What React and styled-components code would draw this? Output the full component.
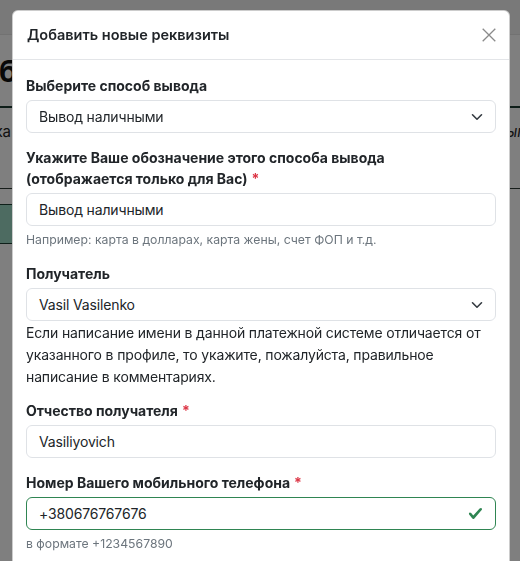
import React from "react";
import styled, { createGlobalStyle } from "styled-components";

const GlobalStyle = createGlobalStyle`
  html, body {
    margin: 0;
    padding: 0;
    height: 100%;
    overflow: hidden;
    background: #fff;
  }
  body {
    font-family: Inter, "Noto Sans", "Liberation Sans", sans-serif;
    color: #212529;
    -webkit-font-smoothing: antialiased;
  }
  *, *::before, *::after { box-sizing: border-box; }
`;

/* ---------- page behind the dialog ---------- */

const Viewport = styled.div`
  display: flex;
  justify-content: center;
  width: 100%;
  height: 100%;
`;

const Page = styled.div`
  flex: 0 0 600px;
  display: flex;
  flex-direction: column;
`;

const TopBar = styled.div`
  height: 35px;
  background: #f2f2f2;
  border-bottom: 1px solid #e4e4e4;
`;

const PageTitle = styled.h1`
  margin: 18px 0 0;
  font-size: 30px;
  line-height: 36px;
  font-weight: 700;
  color: #111;
`;

const Tabs = styled.div`
  margin-top: 17px;
  height: 83px;
  display: flex;
  justify-content: space-between;
  align-items: flex-start;
  padding-top: 14px;
  border-top: 2px solid #1d3d32;
  border-bottom: 1px solid #2c3a35;
  font-size: 15px;
  color: #222;
`;

const Tab = styled.span`
  font-style: ${(p) => (p.$italic ? "italic" : "normal")};
`;

const PageButton = styled.div`
  margin-top: 15px;
  height: 40px;
  width: 180px;
  background: #9bd6c2;
  border: 1px solid #1c3e33;
  border-radius: 4px;
`;

/* ---------- dialog ---------- */

const Backdrop = styled.div`
  position: fixed;
  inset: 0;
  background: rgba(0, 0, 0, 0.5);
`;

const Dialog = styled.div`
  position: fixed;
  top: 10px;
  left: 12px;
  width: 498px;
  bottom: -40px;
  background: #fff;
  border: 1px solid rgba(0, 0, 0, 0.2);
  border-radius: 6px;
  display: flex;
  flex-direction: column;
`;

const Header = styled.div`
  display: flex;
  align-items: center;
  justify-content: space-between;
  padding: 13px 13px 14px 13px;
  border-bottom: 1px solid #e3e5e8;
`;

const Title = styled.h5`
  margin: 0;
  font-size: 14.5px;
  line-height: 21px;
  font-weight: 600;
  color: #212529;
  padding-left: 1px;
`;

const CloseButton = styled.button`
  width: 14px;
  height: 14px;
  padding: 0;
  border: 0;
  background: none;
  color: #8a8a8a;
  display: flex;
  cursor: pointer;
`;

const Body = styled.div`
  padding: 15px 13px;
  display: flex;
  flex-direction: column;
`;

const Field = styled.div`
  margin-bottom: ${(p) => p.$gap ?? 14}px;
`;

const Label = styled.label`
  display: block;
  font-size: 14px;
  line-height: 21px;
  font-weight: 700;
  color: #212529;
  margin-bottom: 4px;
`;

const Required = styled.span`
  color: #dc3545;
  margin-left: 4px;
`;

const Control = styled.div`
  position: relative;
  height: 33px;
  display: flex;
  align-items: center;
  padding: 0 12px;
  border: 1px solid ${(p) => (p.$valid ? "#2f8552" : "#dfe2e6")};
  border-radius: 6px;
  background: #fff;
  font-size: 14px;
  letter-spacing: -0.15px;
  color: #212529;
`;

const ControlText = styled.span`
  flex: 1;
  white-space: nowrap;
`;

const Help = styled.div`
  margin-top: 5px;
  font-size: 12.25px;
  line-height: 18px;
  color: #6c757d;
`;

const Note = styled.p`
  margin: 1px 0 0;
  font-size: 14px;
  line-height: 22px;
  letter-spacing: -0.15px;
  color: #212529;
`;

const Chevron = () => (
  <svg width="12" height="8" viewBox="0 0 12 8" fill="none">
    <path d="M1.5 1.8L6 6.2l4.5-4.4" stroke="#343a40" strokeWidth="1.6" strokeLinecap="round" strokeLinejoin="round" />
  </svg>
);

const Check = () => (
  <svg width="15" height="15" viewBox="0 0 8 8">
    <path fill="#2f8552" d="M2.3 6.73.6 4.53c-.4-1.04.46-1.4 1.1-.8l1.1 1.4 3.4-3.8c.6-.63 1.6-.27 1.2.7l-4 4.6c-.43.5-.8.4-1.1.1z" />
  </svg>
);

const CloseIcon = () => (
  <svg width="14" height="14" viewBox="0 0 14 14" fill="none">
    <path d="M0.7 0.7l12.6 12.6M13.3 0.7L0.7 13.3" stroke="currentColor" strokeWidth="1.3" />
  </svg>
);

export default function App() {
  return (
    <>
      <GlobalStyle />
      <Viewport>
        <Page>
          <TopBar />
          <PageTitle>Кабинет</PageTitle>
          <Tabs>
            <Tab>Заявка</Tab>
            <Tab>Реквизиты</Tab>
            <Tab $italic>Выплати</Tab>
          </Tabs>
          <PageButton />
        </Page>
      </Viewport>

      <Backdrop />
      <Dialog role="dialog" aria-modal="true">
        <Header>
          <Title>Добавить новые реквизиты</Title>
          <CloseButton aria-label="Закрыть">
            <CloseIcon />
          </CloseButton>
        </Header>
        <Body>
          <Field>
            <Label>Выберите способ вывода</Label>
            <Control>
              <ControlText>Вывод наличными</ControlText>
              <Chevron />
            </Control>
          </Field>

          <Field>
            <Label>
              Укажите Ваше обозначение этого способа вывода
              <br />
              (отображается только для Вас)
              <Required>*</Required>
            </Label>
            <Control>
              <ControlText>Вывод наличными</ControlText>
            </Control>
            <Help>Например: карта в долларах, карта жены, счет ФОП и т.д.</Help>
          </Field>

          <Field $gap={12}>
            <Label>Получатель</Label>
            <Control>
              <ControlText>Vasil Vasilenko</ControlText>
              <Chevron />
            </Control>
            <Note>
              Если написание имени в данной платежной системе отличается от
              <br />
              указанного в профиле, то укажите, пожалуйста, правильное
              <br />
              написание в комментариях.
            </Note>
          </Field>

          <Field>
            <Label>
              Отчество получателя<Required>*</Required>
            </Label>
            <Control>
              <ControlText>Vasiliyovich</ControlText>
            </Control>
          </Field>

          <Field>
            <Label>
              Номер Вашего мобильного телефона<Required>*</Required>
            </Label>
            <Control $valid>
              <ControlText>+380676767676</ControlText>
              <Check />
            </Control>
            <Help>в формате +1234567890</Help>
          </Field>
        </Body>
      </Dialog>
    </>
  );
}
